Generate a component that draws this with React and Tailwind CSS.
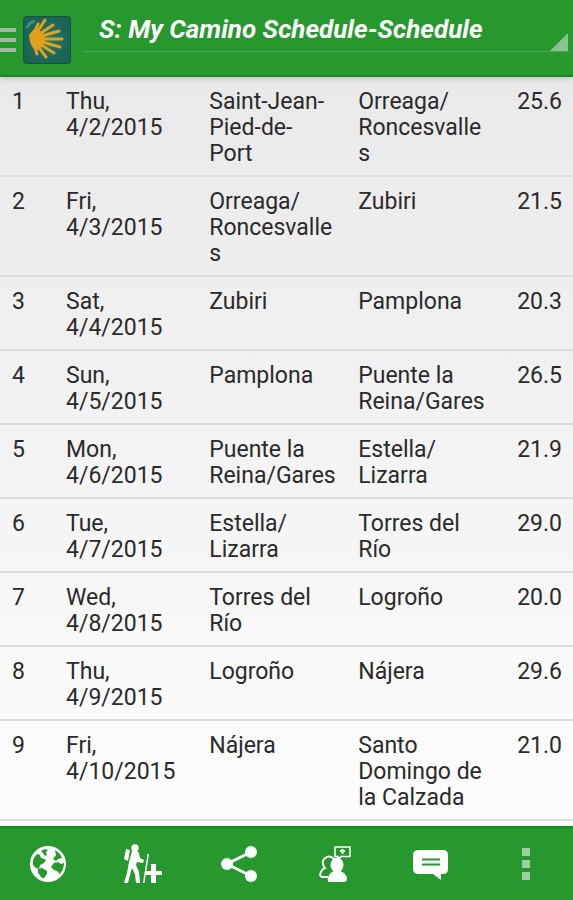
import React, { useState } from "react";

const stages = [
  { day: 1, date: ["Thu,", "4/2/2015"], from: ["Saint-Jean-", "Pied-de-", "Port"], to: ["Orreaga/", "Roncesvalle", "s"], km: "25.6" },
  { day: 2, date: ["Fri,", "4/3/2015"], from: ["Orreaga/", "Roncesvalle", "s"], to: ["Zubiri"], km: "21.5" },
  { day: 3, date: ["Sat,", "4/4/2015"], from: ["Zubiri"], to: ["Pamplona"], km: "20.3" },
  { day: 4, date: ["Sun,", "4/5/2015"], from: ["Pamplona"], to: ["Puente la", "Reina/Gares"], km: "26.5" },
  { day: 5, date: ["Mon,", "4/6/2015"], from: ["Puente la", "Reina/Gares"], to: ["Estella/", "Lizarra"], km: "21.9" },
  { day: 6, date: ["Tue,", "4/7/2015"], from: ["Estella/", "Lizarra"], to: ["Torres del", "Río"], km: "29.0" },
  { day: 7, date: ["Wed,", "4/8/2015"], from: ["Torres del", "Río"], to: ["Logroño"], km: "20.0" },
  { day: 8, date: ["Thu,", "4/9/2015"], from: ["Logroño"], to: ["Nájera"], km: "29.6" },
  { day: 9, date: ["Fri,", "4/10/2015"], from: ["Nájera"], to: ["Santo", "Domingo de", "la Calzada"], km: "21.0" },
];

const ShellLogo = () => (
  <svg viewBox="0 0 48 48" className="size-12 shrink-0" aria-hidden="true">
    <defs>
      <radialGradient id="tile">
        <stop offset="0" stopColor="#1d7d70" />
        <stop offset="1" stopColor="#1b6355" />
      </radialGradient>
    </defs>
    <rect x="0.5" y="0.5" width="47" height="47" rx="3" fill="url(#tile)" stroke="#17543f" />
    <path d="M4 12q2-6 8-7" stroke="#3f8f88" strokeWidth="3" fill="none" />
    <g stroke="#e0a01c" strokeWidth="3" strokeLinecap="round">
      <path d="M10 20L15 8M11 21L22 4M12 21L30 9M12 22L36 15M12 23L39 23M12 24L37 31M12 25L31 37M11 25L23 41M10 25L14 38" />
    </g>
    <path d="M6 19l5-6 5 1 5 6 1 4-2 5-5 5-5-2-3-6z" fill="#e0a01c" />
  </svg>
);

const GlobeIcon = () => (
  <svg viewBox="0 0 40 40" className="size-10" aria-hidden="true">
    <circle cx="20" cy="20" r="18" fill="#fff" />
    <g fill="#26982d">
      <path d="M9 10l3 1 1 3 3 1 2 1-2 3-4 2-1 4-3-1-3-3q-1-6 4-11z" />
      <path d="M13 7l4-2 3 1-2 2 1 3-2 1-2-3z" />
      <path d="M10 25l4-1 5 3 0 3-3 4-2 0-4-5z" />
      <path d="M27 6q5 3 7 8l-4 1-2 2-3-2 3-4z" />
      <path d="M26 19l4-1 3 2 3-1q0 6-4 11l-3-3-3-1-3-3z" />
    </g>
  </svg>
);

const HikerIcon = () => (
  <svg viewBox="0 0 40 40" className="size-10" fill="#fff" aria-hidden="true">
    <circle cx="12" cy="4" r="3.7" />
    <path d="M3 5l4 1-2 11-4-2z" />
    <path d="M9 7h5l2 2 1 5 4 2-1 3-6-1-1 3 3 7 1 11h-4l-1-9-3-6-2 7-2 8H1l3-10 2-11z" />
    <path d="M24.500 10h1.500l-4.500 29h-1.500z" />
    <path d="M28 20h5v7h6v4h-6v8h-5v-8h-5v-4h5z" />
  </svg>
);

const ShareIcon = () => (
  <svg viewBox="0 0 40 40" className="size-10" aria-hidden="true">
    <path d="M32 8L8 20l24 12" fill="none" stroke="#fff" strokeWidth="3" />
    <circle cx="32" cy="8" r="6" fill="#fff" />
    <circle cx="8" cy="20" r="6" fill="#fff" />
    <circle cx="32" cy="32" r="6" fill="#fff" />
  </svg>
);

const PeopleIcon = () => (
  <svg viewBox="0 0 40 40" className="size-10" aria-hidden="true">
    <path d="M14 33H8q-3-1-1-5 1-3 4-4-4-5-1-9 5-5 10 0" fill="none" stroke="#fff" strokeWidth="2" />
    <ellipse cx="23" cy="21" rx="6.500" ry="7.500" fill="#fff" />
    <path d="M15 38q-2-1-1-4 1-5 6-7h6q6 2 7 7 0 3-2 4z" fill="#fff" />
    <path d="M21 3h15v9.500h-9l-3 3V12.500h-3z" fill="none" stroke="#fff" strokeWidth="1.500" />
    <path d="M28.500 5v5M26 7h5" stroke="#fff" strokeWidth="2" />
  </svg>
);

const ChatIcon = () => (
  <svg viewBox="0 0 40 40" className="size-10" aria-hidden="true">
    <path d="M9 6h24q5 0 5 5v14q0 5-5 5h-2v6l-8-6H9q-6 0-6-5V11q0-5 6-5z" fill="#fff" />
    <path d="M12 15.500h18M12 20.500h18" stroke="#26982d" strokeWidth="2" />
  </svg>
);

const MoreIcon = () => (
  <svg viewBox="0 0 40 40" className="size-10" fill="#9bd09e" aria-hidden="true">
    <path d="M17 4h8v8h-8zM17 16h8v8h-8zM17 28h8v8h-8z" />
  </svg>
);

const actions = [
  { label: "Map", Icon: GlobeIcon },
  { label: "Add stage", Icon: HikerIcon },
  { label: "Share", Icon: ShareIcon },
  { label: "Community", Icon: PeopleIcon },
  { label: "Comments", Icon: ChatIcon },
  { label: "More options", Icon: MoreIcon },
];

const Lines = ({ items }) => items.map((line) => <div key={line}>{line}</div>);

const App = () => {
  const [view, setView] = useState("schedule");

  return (
    <div className="flex flex-col h-screen bg-linear-to-b from-[#e7e7e7] to-white font-['Roboto',sans-serif] text-[#2a2a2a]">
      {/* Title bar */}
      <header className="flex shrink-0 h-[77px] pr-1 bg-[#26982d] border-b-2 border-[#16851d] shadow-md">
        <button aria-label="Open menu" className="flex items-center gap-[6px] h-20">
          <svg viewBox="0 0 17 24" className="w-[17px] h-6" aria-hidden="true">
            <path d="M0 2h16M0 12h16M0 22h16" stroke="#a3b8a3" strokeWidth="4" />
          </svg>
          <ShellLogo />
        </button>
        <div className="relative flex-1 ml-3 mt-2 h-11 border-b border-[#45a74b]">
          <select
            aria-label="View"
            value={view}
            onChange={(e) => setView(e.target.value)}
            className="appearance-none w-full h-full pl-4 bg-transparent text-white text-[26px] font-bold italic outline-none"
          >
            <option value="schedule">S: My Camino Schedule-Schedule</option>
          </select>
          <svg viewBox="0 0 20 20" className="absolute right-px bottom-0 size-[18px] pointer-events-none" aria-hidden="true">
            <path d="M20 0v20H0z" fill="#8cc490" />
          </svg>
        </div>
      </header>

      {/* Stage list */}
      <main className="flex-1 min-h-0 overflow-y-auto">
        <table className="w-full table-fixed text-left text-[23px] leading-[26px]">
          <colgroup>
            <col className="w-[66px]" />
            <col className="w-[25%]" />
            <col className="w-[26%]" />
            <col className="w-[26%]" />
            <col />
          </colgroup>
          <tbody>
            {stages.map((stage) => (
              <tr key={stage.day} className="align-top border-b-2 border-[#dcdcdc]">
                <td className="pt-3 pb-2 pl-3">{stage.day}</td>
                <td className="pt-3 pb-2">
                  <Lines items={stage.date} />
                </td>
                <td className="pt-3 pb-2 pr-5">
                  <Lines items={stage.from} />
                </td>
                <td className="pt-3 pb-2 pr-5">
                  <Lines items={stage.to} />
                </td>
                <td className="pt-3 pb-2 pr-[11px] text-right">{stage.km}</td>
              </tr>
            ))}
          </tbody>
        </table>
      </main>

      {/* Action bar */}
      <footer className="flex shrink-0 h-[74px] bg-[#26982d] border-t-2 border-[#16901c]">
        {actions.map(({ label, Icon }) => (
          <button key={label} aria-label={label} className="flex flex-1 items-center justify-center">
            <Icon />
          </button>
        ))}
      </footer>
    </div>
  );
};

export default App;
